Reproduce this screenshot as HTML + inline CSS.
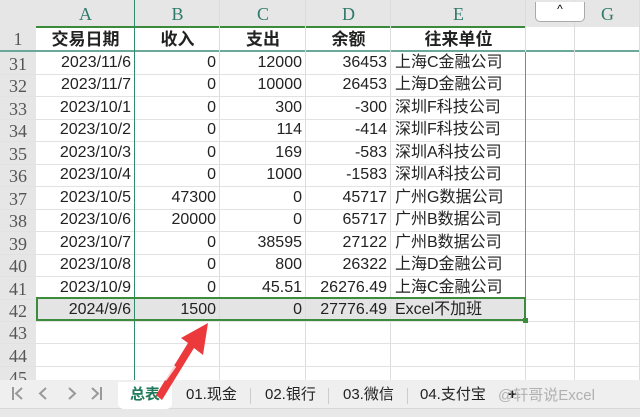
<!DOCTYPE html><html><head><meta charset="utf-8"><style>
body{margin:0;width:640px;height:417px;overflow:hidden;background:#fff;font-family:"Liberation Sans","Noto Sans CJK SC",sans-serif;position:relative}
.a{position:absolute;box-sizing:border-box}
.c{position:absolute;height:22px;line-height:22px;font-size:16px;color:#222;white-space:nowrap}
.r{text-align:right}
.rh{position:absolute;left:0;width:36px;text-align:center;font-size:18px;color:#555;font-family:"Liberation Serif","Noto Serif CJK SC",serif}
.nv{position:absolute;top:384px;font-size:20px;color:#999;line-height:22px}
</style></head><body>
<div class="a" style="left:0;top:0;width:640px;height:27px;background:#e6e6e6"></div>
<div class="a" style="left:0;top:27px;width:36px;height:360px;background:#e6e6e6"></div>
<div class="a" style="left:36px;top:297px;width:490px;height:24px;background:#e4e4e4"></div>
<div class="a" style="left:36px;top:26px;width:490px;height:2px;background:#3a8a3a"></div>
<div class="a" style="left:0;top:50px;width:640px;height:2px;background:#6aa89a"></div>
<div id="grid"></div>
<div class="a" style="left:134px;top:0;width:1px;height:380px;background:#2e8b6e"></div>
<div class="a" style="left:525px;top:52px;width:1px;height:246px;background:#6a8ab0"></div>
<div class="a" style="left:535px;top:2px;width:50px;height:20px;border:1px solid #aaa;border-top:none;border-radius:0 0 5px 5px;background:#fff;font-size:12px;text-align:center;line-height:14px">^</div>
<div class="a" style="left:36px;top:297px;width:490px;height:24px;border:2px solid #3d8b3d"></div>
<div class="a" style="left:523px;top:318px;width:5px;height:5px;background:#3d8b3d"></div>
<div class="a" style="left:0;top:380px;width:640px;height:30px;background:#efefef"></div>
<div class="a" style="left:0;top:408px;width:640px;height:9px;background:#e8e8e8;border-top:1px solid #d8d8d8"></div>
<svg class="a" style="left:0;top:380px" width="110" height="28" fill="none" stroke="#999" stroke-width="2"><path d="M13 7v13M22 8l-6 5.5 6 5.5M46 8l-6 5.5 6 5.5M69 8l6 5.5-6 5.5M92 8l6 5.5-6 5.5M101 7v13"/></svg>
<div class="a" style="left:118px;top:382px;width:54px;height:27px;background:#fff;border-radius:0 0 6px 6px;text-align:center;line-height:26px;font-size:15px;color:#1e7a5a;font-weight:bold">总表</div>
<div class="a" style="top:382px;left:186px;font-size:15px;line-height:26px;color:#222">01.现金</div>
<div class="a" style="left:250px;top:388px;width:1px;height:16px;background:#ccc"></div>
<div class="a" style="top:382px;left:265px;font-size:15px;line-height:26px;color:#222">02.银行</div>
<div class="a" style="left:328px;top:388px;width:1px;height:16px;background:#ccc"></div>
<div class="a" style="top:382px;left:343px;font-size:15px;line-height:26px;color:#222">03.微信</div>
<div class="a" style="left:407px;top:388px;width:1px;height:16px;background:#ccc"></div>
<div class="a" style="top:382px;left:420px;font-size:15px;line-height:26px;color:#222">04.支付宝</div>
<div class="a" style="top:382px;left:508px;font-size:15px;line-height:26px;color:#222;font-weight:bold">+</div>
<div class="a" style="top:383px;left:498px;font-size:15px;line-height:26px;color:rgba(150,150,150,.7)">@轩哥说Excel</div>
<svg class="a" style="left:0;top:0" width="640" height="417"><g fill="#ec3a3c">
<polygon points="208,323 181,338 188,343 156,395 162,400 194,348 203,355"/>
</g><line x1="165" y1="380" x2="175" y2="366" stroke="#fff" stroke-width="3" opacity=".8"/></svg>
<script>
var cols=[[36,135,'A'],[135,220,'B'],[220,306,'C'],[306,391,'D'],[391,526,'E'],[526,575,''],[575,640,'G']];
var g='';
cols.forEach(function(c){g+='<div class="a" style="left:'+(c[1]-1)+'px;top:0;width:1px;height:380px;background:#dcdcdc"></div>';
if(c[2])g+='<div class="c" style="top:3px;left:'+c[0]+'px;width:'+(c[1]-c[0])+'px;text-align:center;color:#2e7a6a;font-family:Liberation Serif,serif;font-size:18px">'+c[2]+'</div>';});
g+='<div class="rh" style="top:29px">1</div>';
var d=[['2023/11/6',0,12000,36453,'上海C金融公司'],['2023/11/7',0,10000,26453,'上海D金融公司'],['2023/10/1',0,300,-300,'深圳F科技公司'],['2023/10/2',0,114,-414,'深圳F科技公司'],['2023/10/3',0,169,-583,'深圳A科技公司'],['2023/10/4',0,1000,-1583,'深圳A科技公司'],['2023/10/5',47300,0,45717,'广州G数据公司'],['2023/10/6',20000,0,65717,'广州B数据公司'],['2023/10/7',0,38595,27122,'广州B数据公司'],['2023/10/8',0,800,26322,'上海D金融公司'],['2023/10/9',0,45.51,'26276.49','上海C金融公司'],['2024/9/6',1500,0,'27776.49','Excel不加班']];
var h=['交易日期','收入','支出','余额','往来单位'];
h.forEach(function(t,i){g+='<div class="c" style="top:29px;left:'+cols[i][0]+'px;width:'+(cols[i][1]-cols[i][0])+'px;text-align:center;font-weight:bold;font-size:17px">'+t+'</div>';});
for(var i=0;i<15;i++){var y=52+i*22.45;
g+='<div class="a" style="left:0;top:'+(y+22)+'px;width:640px;height:1px;background:#e2e2e2"></div>';
g+='<div class="rh" style="top:'+(y+1)+'px;line-height:22px;height:22px">'+(31+i)+'</div>';
if(i<12){var r=d[i];for(var j=0;j<4;j++)g+='<div class="c r" style="top:'+y+'px;left:'+cols[j][0]+'px;width:'+(cols[j][1]-cols[j][0]-4)+'px">'+r[j]+'</div>';
g+='<div class="c" style="top:'+y+'px;left:395px">'+r[4]+'</div>';}}
document.getElementById('grid').innerHTML=g;
</script>
</body></html>
